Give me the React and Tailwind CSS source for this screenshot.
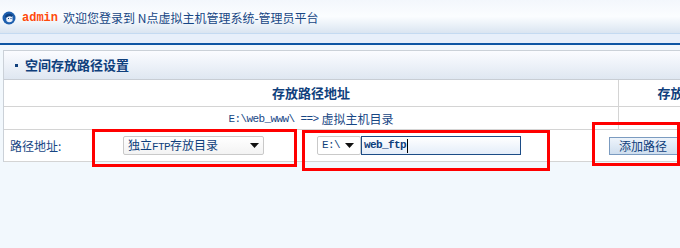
import React from "react";

const cjk = "font-['SimSun','Noto_Sans_CJK_SC',sans-serif]";
const mono = "font-['Liberation_Mono','Noto_Sans_CJK_SC',monospace]";

const UserIcon = () => (
  <svg width="14" height="14" viewBox="0 0 14 14">
    <circle cx="7" cy="7" r="6.5" fill="#1d5fae" />
    <path d="M4 6 Q7 2 10.5 5 L10.5 10 Q7 12.5 4.5 10 Z" fill="#e9f0fb" />
    <path d="M3 5 Q6 1 11 4 L10 6 Q7 4 4 7 Z" fill="#0c3f80" />
    <rect x="6" y="7" width="1" height="1" fill="#0c3f80" />
    <rect x="8.5" y="7" width="1" height="1" fill="#0c3f80" />
  </svg>
);

const Arrow = () => (
  <svg width="9" height="5" viewBox="0 0 9 5">
    <path d="M0 0 H9 L4.5 5 Z" fill="#111" />
  </svg>
);

export default function App() {
  return (
    <div className={`relative w-[680px] h-[248px] overflow-hidden bg-[#f2f8fd] ${cjk} text-[12px]`}>
      {/* top bar */}
      <div className="h-[33px] bg-gradient-to-b from-[#f3f7fc] via-[#fbfdff] to-[#dae5f1] flex items-center pl-[2px] pt-[2px]">
        <UserIcon />
        <span className={`${mono} font-bold text-[12px] text-[#ff4a0c] ml-[6px]`}>admin</span>
        <span className="text-[#174684] ml-[5px]">欢迎您登录到 N点虚拟主机管理系统-管理员平台</span>
      </div>
      <div className="h-px bg-[#c4daf1]" />
      <div className="h-[9px] bg-[#e7effa]" />
      <div className="h-[2px] bg-[#0e56a4]" />

      {/* panel */}
      <div className="mt-[5px] ml-[3px] w-[800px] border-l border-t border-[#cbd1d8]">
        <div className="h-[29px] bg-gradient-to-b from-[#fbfcff] to-[#dfe7f1] border-b border-[#c8cdd4] flex items-center pl-[11px] text-[13px] font-bold text-[#0f3f7c]">
          <span className="w-[3px] h-[3px] bg-[#0f3f7c] mr-[7px]" />
          空间存放路径设置
        </div>
        <div className="flex h-[27px] bg-white border-b border-[#d4d4d4] text-[13px] font-bold text-[#0f3f7c]">
          <div className="w-[614px] flex items-center justify-center">存放路径地址</div>
          <div className="w-[156px] border-l border-[#d4d4d4] flex items-center justify-center">存放路径操作</div>
        </div>
        <div className="flex h-[23px] bg-white border-b border-[#d4d4d4] text-[#174684]">
          <div className="w-[614px] flex items-center justify-center pt-[2px]">
            <span className={`${mono} text-[11px] tracking-[-0.6px] mr-[3px]`}>E:\web_www\ ==&gt;</span>
            虚拟主机目录
          </div>
          <div className="w-[156px] border-l border-[#d4d4d4]" />
        </div>
        <div className="flex items-center h-[32px] bg-white border-b border-[#d4d4d4] text-[#174684]">
          <div className="w-[119px] pl-[6px]">路径地址:</div>
          <div className="w-[141px] h-[19px] border border-[#c9c9c9] rounded-[2px] bg-gradient-to-b from-white to-[#f3f3f3] flex items-center justify-between pl-[4px] pr-[4px]">
            <span className="text-[#0f3f7c]">
              独立<span className={`${mono} text-[11px] tracking-[-0.6px]`}>FTP</span>存放目录
            </span>
            <Arrow />
          </div>
          <div className="w-[53px]" />
          <div className="w-[44px] h-[19px] border border-[#c9c9c9] rounded-[2px] bg-white flex items-center justify-between pl-[4px] pr-[6px]">
            <span className={`${mono} text-[11px] tracking-[-0.6px] text-[#0f3f7c]`}>E:\</span>
            <Arrow />
          </div>
          <div className="w-[160px] h-[19px] border border-[#1c4c86] bg-gradient-to-b from-white to-[#e4edf9] flex items-center pl-[2px]">
            <span className={`${mono} text-[11px] tracking-[-0.6px] font-bold text-[#0f3f7c]`}>web_ftp</span>
            <span className="w-px h-[14px] bg-black ml-[1px]" />
          </div>
          <div className="w-[88px]" />
          <button className="w-[80px] h-[18px] border border-[#7b9bc0] bg-gradient-to-b from-[#eef4fb] to-[#cfdeee] text-[#0f3f7c] text-[12px] flex items-center pl-[9px]">
            添加路径
          </button>
        </div>
      </div>

      {/* annotation boxes */}
      <div className="absolute left-[92px] top-[129px] w-[205px] h-[38px] border-[3px] border-[#ff0000]" />
      <div className="absolute left-[302px] top-[130px] w-[248px] h-[41px] border-[3px] border-[#ff0000]" />
      <div className="absolute left-[592px] top-[122px] w-[88px] h-[44px] border-[3px] border-[#ff0000]" />
    </div>
  );
}
